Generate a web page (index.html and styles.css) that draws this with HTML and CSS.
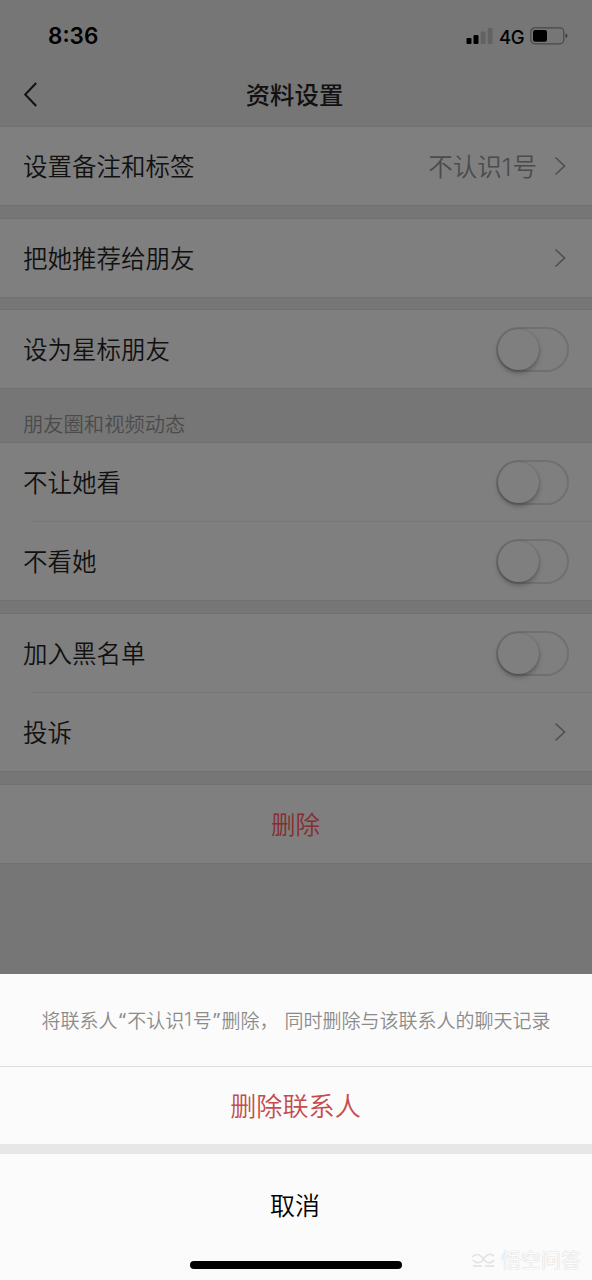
FILE: index.html
```html
<!DOCTYPE html>
<html lang="zh-CN">
<head>
<meta charset="utf-8">
<title>资料设置</title>
<link rel="stylesheet" href="styles.css">
</head>
<body>
<div class="screen">
  <header class="status">
    <span class="time">8:36</span>
    <div class="indicators">
      <svg class="signal" width="28" height="18" viewBox="0 0 28 18"><rect x=".5" y="11" width="5" height="6" rx="1"/><rect x="7.5" y="8" width="5" height="9" rx="1"/><g fill="#626262"><rect x="14.7" y="4.5" width="4.8" height="12.5" rx="1"/><rect x="21.7" y="1" width="4.8" height="16" rx="1"/></g></svg>
      <span class="network">4G</span>
      <svg class="battery" width="38" height="18" viewBox="0 0 38 18"><rect x=".8" y=".8" width="33" height="16" rx="4" fill="none" stroke="#484848" stroke-width="1.2"/><rect x="3" y="3" width="14" height="11.7" rx="2"/><path d="M35.5 6.5q2 .5 2 2.3t-2 2.3z" fill="#3b3b3b"/></svg>
    </div>
  </header>
  <nav class="nav">
    <svg class="back" width="14" height="26" viewBox="0 0 14 26"><path d="M13.2 2 2.2 13.5l11 11.5" fill="none" stroke="#111" stroke-width="2"/></svg>
    <h1 class="title">资料设置</h1>
  </nav>
  <main class="settings">
    <section class="group">
      <div class="row"><span class="label">设置备注和标签</span><span class="value">不认识<span class="digit">1</span>号</span><svg class="chevron" viewBox="0 0 12 20"><path d="m1.5 1.5 9 8.5-9 8.5"/></svg></div>
    </section>
    <section class="group">
      <div class="row"><span class="label">把她推荐给朋友</span><svg class="chevron" viewBox="0 0 12 20"><path d="m1.5 1.5 9 8.5-9 8.5"/></svg></div>
    </section>
    <section class="group starred">
      <div class="row"><span class="label">设为星标朋友</span><span class="switch"><span class="knob"></span></span></div>
    </section>
    <h2 class="caption">朋友圈和视频动态</h2>
    <section class="group">
      <div class="row"><span class="label">不让她看</span><span class="switch"><span class="knob"></span></span></div>
      <div class="row divided"><span class="label">不看她</span><span class="switch"><span class="knob"></span></span></div>
    </section>
    <section class="group">
      <div class="row"><span class="label">加入黑名单</span><span class="switch"><span class="knob"></span></span></div>
      <div class="row divided"><span class="label">投诉</span><svg class="chevron" viewBox="0 0 12 20"><path d="m1.5 1.5 9 8.5-9 8.5"/></svg></div>
    </section>
    <section class="group">
      <div class="row remove">删除</div>
    </section>
  </main>
  <section class="sheet">
    <p class="message">将联系人<span class="quote">“</span>不认识<span class="digit">1</span>号<span class="quote">”</span>删除，<span class="clause">同时删除与该联系人的聊天记录</span></p>
    <div class="action confirm">删除联系人</div>
    <div class="action cancel">取消</div>
    <div class="home"></div>
    <div class="watermark">
      <svg width="25" height="16" viewBox="0 0 25 16"><path d="M1 5q5-5 10 0l3 4q5 4 9-1M23 4q-5-4-9 1l-3 4q-5 4-9-1M2 14h9m3 0h9"/></svg>
      <span>悟空问答</span>
    </div>
  </section>
</div>
</body>
</html>
```
FILE: styles.css
```css
* { box-sizing: border-box; }
body { margin: 0; font-family: "Noto Sans CJK SC", sans-serif; font-weight: 350; }
.screen { width: 592px; height: 1280px; display: flex; flex-direction: column; background: #767676; color: #111; overflow: hidden; }
.status { height: 64px; padding: 8px 24px 0 48px; display: flex; align-items: center; justify-content: space-between; flex: none; color: #000; font-family: Inter, sans-serif; }
.time { font-size: 22.5px; font-weight: 600; line-height: 28px; }
.indicators { display: flex; align-items: center; }
.network { margin: 1px 6px 0 5px; width: 25px; font-size: 18.5px; font-weight: 500; line-height: 20px; letter-spacing: -.3px; }
.nav { height: 62px; flex: none; padding: 0 26px 2px 23px; display: grid; grid-template-columns: 14px 1fr 14px; align-items: center; }
.title { margin: 0; text-align: center; font-size: 24.4px; font-weight: 500; line-height: 36px; }
.settings { flex: 1; min-height: 0; }
.group { background: #7f7f7f; border-top: 1px solid #717171; border-bottom: 1px solid #717171; }
.group + .group { margin-top: 12px; }
.group + .starred { margin-top: 11px; }
.row { height: 78px; padding: 0 23px 0 23px; display: flex; align-items: center; font-size: 24.5px; line-height: 36px; position: relative; }
.label { flex: 1; }
.value { color: #4b4b4b; margin-right: 17px; }
.digit { font-family: Inter, sans-serif; font-weight: 400; }
.value .digit { font-size: 24.5px; font-weight: 300; padding-right: 1px; }
.message .digit { font-size: 19px; font-weight: 300; padding-right: 1px; }
.chevron { width: 12px; height: 20px; margin-right: 3px; fill: none; stroke: #505050; stroke-width: 1.7; }
.divided { height: 79px; padding-top: 1px; }
.divided::before { content: ""; position: absolute; left: 32px; right: 0; top: 0; height: 1px; background: #777; }
.switch { width: 73px; height: 45px; border: 2px solid #707070; border-radius: 23px; flex: none; }
.knob { display: block; width: 41px; height: 41px; border-radius: 50%; background: #7f7f7f; box-shadow: 0 3px 5px rgba(0,0,0,.28), 0 0 2px rgba(0,0,0,.18); }
.caption { height: 53px; margin: 0; padding: 19px 23px 0; font-size: 20.3px; line-height: 30px; font-weight: 350; color: #4b4b4b; }
.remove { justify-content: center; padding-right: 24px; color: #872c30; }
.sheet { height: 306px; flex: none; background: #fbfbfb; position: relative; display: flex; flex-direction: column; }
.message { height: 92px; margin: 0; padding: 0; display: flex; align-items: center; justify-content: center; white-space: nowrap; font-size: 19px; line-height: 28px; color: #8b8b8b; }
.quote { font-family: "Noto Sans", sans-serif; font-weight: 400; padding: 0 1.5px; }
.clause { margin-left: 6px; }
.action { display: flex; justify-content: center; align-items: center; }
.confirm { height: 78px; padding: 0 1px 1px 0; border-top: 1px solid #ddd; color: #c54c4d; font-size: 26.1px; line-height: 36px; }
.cancel { height: 112px; padding: 0 2px 2px 0; border-top: 10px solid #e7e7e7; color: #000; font-size: 25px; line-height: 36px; }
.home { width: 212px; height: 8px; margin: 5px auto 0; border-radius: 4px; background: #000; }
.watermark { position: absolute; right: 11px; bottom: 6px; display: flex; gap: 5px; align-items: center; color: #fcfcfc; font-size: 20px; line-height: 28px; text-shadow: 0 0 1px #ccc, 0 0 1px #ddd; }
.watermark svg { fill: none; stroke: #e0e0e0; stroke-width: 1.5; }
```
